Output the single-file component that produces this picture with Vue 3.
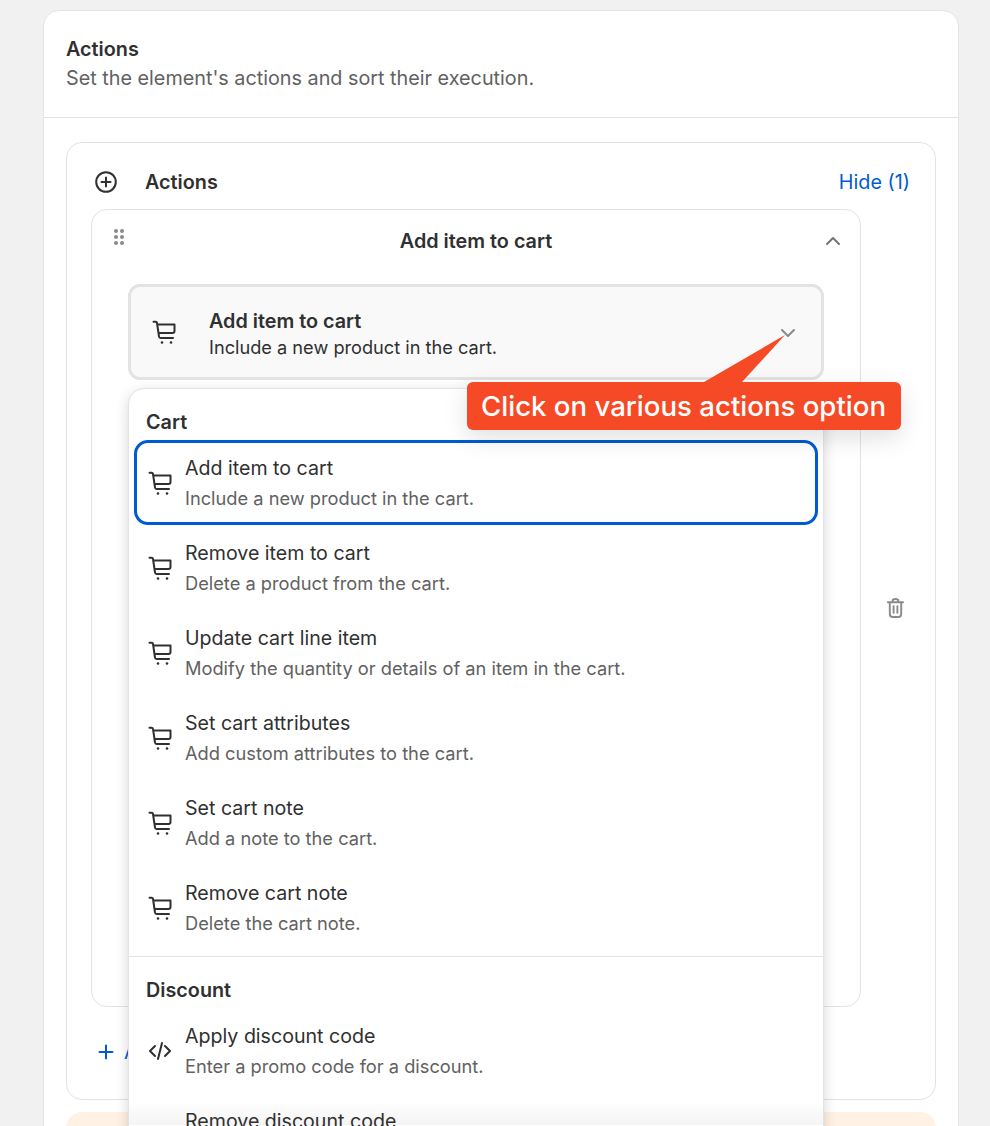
<script setup>
const cart = [
  ['Add item to cart', 'Include a new product in the cart.', true],
  ['Remove item to cart', 'Delete a product from the cart.'],
  ['Update cart line item', 'Modify the quantity or details of an item in the cart.'],
  ['Set cart attributes', 'Add custom attributes to the cart.'],
  ['Set cart note', 'Add a note to the cart.'],
  ['Remove cart note', 'Delete the cart note.'],
]
const cartPath = 'M1.5 1.800H3.600C4.400 1.800 4.900 2.300 5 3L7 16.500C7.100 17.500 7.700 18 8.600 18H21M5.300 4.500H22.500V11C22.500 12.400 21.600 13 20.500 13H6.500'
</script>

<template>
  <div class="page">
    <section class="panel">
      <header class="panel-head">
        <h2>Actions</h2>
        <p>Set the element's actions and sort their execution.</p>
      </header>
      <div class="panel-body">
        <div class="inner">
          <div class="inner-head">
            <svg class="plus" viewBox="0 0 24 24" fill="none" stroke="#303030" stroke-width="2" stroke-linecap="round">
              <circle cx="12" cy="12" r="9.800" />
              <path d="M12 7.500v9M7.500 12h9" />
            </svg>
            <strong>Actions</strong>
            <a class="hide">Hide (1)</a>
          </div>

          <div class="item-row">
            <div class="item">
              <div class="item-head">
                <svg class="drag" viewBox="0 0 12 18" fill="#8a8a8a">
                  <circle cx="3" cy="3" r="2" /><circle cx="9" cy="3" r="2" />
                  <circle cx="3" cy="9" r="2" /><circle cx="9" cy="9" r="2" />
                  <circle cx="3" cy="15" r="2" /><circle cx="9" cy="15" r="2" />
                </svg>
                <strong>Add item to cart</strong>
                <svg class="chev" viewBox="0 0 16 10" fill="none" stroke="#757575" stroke-width="2" stroke-linecap="round" stroke-linejoin="round">
                  <path d="M2 8l6-6 6 6" />
                </svg>
              </div>
              <div class="item-body">
                <div class="select">
                  <svg class="cart" viewBox="0 0 24 24" fill="none" stroke="#303030" stroke-width="2" stroke-linecap="round" stroke-linejoin="round">
                    <path :d="cartPath" />
                    <circle cx="10" cy="22.500" r="1.300" fill="#303030" stroke="none" />
                    <circle cx="19" cy="22.500" r="1.300" fill="#303030" stroke="none" />
                  </svg>
                  <div class="select-text">
                    <strong>Add item to cart</strong>
                    <span>Include a new product in the cart.</span>
                  </div>
                  <svg class="sel-chev" viewBox="0 0 16 10" fill="none" stroke="#8a8a8a" stroke-width="2" stroke-linecap="round" stroke-linejoin="round">
                    <path d="M2 2l6 6 6-6" />
                  </svg>
                </div>

                <div class="menu">
                  <div class="fade"></div>
                  <div class="group">
                    <h3>Cart</h3>
                    <div v-for="row in cart" :key="row[0]" class="opt" :class="{ active: row[2] }">
                      <svg class="cart" viewBox="0 0 24 24" fill="none" stroke="#303030" stroke-width="2" stroke-linecap="round" stroke-linejoin="round">
                        <path :d="cartPath" />
                        <circle cx="10" cy="22.500" r="1.300" fill="#303030" stroke="none" />
                        <circle cx="19" cy="22.500" r="1.300" fill="#303030" stroke="none" />
                      </svg>
                      <div class="opt-text">
                        <span class="t">{{ row[0] }}</span>
                        <span class="d">{{ row[1] }}</span>
                      </div>
                    </div>
                  </div>
                  <div class="group second">
                    <h3>Discount</h3>
                    <div class="opt">
                      <svg class="cart" viewBox="0 0 24 24" fill="none" stroke="#303030" stroke-width="2" stroke-linecap="round" stroke-linejoin="round">
                        <path d="M7 7L2 12 7 17M17 7l5 5-5 5M14 4L10 20" />
                      </svg>
                      <div class="opt-text">
                        <span class="t">Apply discount code</span>
                        <span class="d">Enter a promo code for a discount.</span>
                      </div>
                    </div>
                    <div class="opt top">
                      <span class="cart"></span>
                      <div class="opt-text">
                        <span class="t">Remove discount code</span>
                      </div>
                    </div>
                  </div>
                </div>
              </div>
            </div>
            <svg class="trash" viewBox="0 0 20 22" fill="none" stroke="#8a8a8a" stroke-width="2" stroke-linecap="round" stroke-linejoin="round">
              <path d="M2 5h16M7 5V3.500C7 2.300 8 1.500 10 1.500s3 .8 3 2V5M4 5v12c0 2 1.200 3.500 3 3.500h6c1.800 0 3-1.500 3-3.500V5M8 9v7M12 9v7" />
            </svg>
          </div>

          <div class="add">
            <svg viewBox="0 0 16 16" fill="none" stroke="#005bd3" stroke-width="2" stroke-linecap="round">
              <path d="M8 1.500v13M1.500 8h13" />
            </svg>
            <span>Add</span>
          </div>
        </div>
        <div class="notice"></div>
      </div>
    </section>

    <div class="callout">
      <svg class="tail" viewBox="0 0 90 47">
        <path d="M83 0L2 47H40Z" fill="#f64a26" />
      </svg>
      <span>Click on various actions option</span>
    </div>
  </div>
</template>

<style>
html, body { margin: 0; background: #f1f1f1; overflow: hidden; }
</style>

<style scoped>
.page {
  position: relative;
  height: 1126px;
  overflow: hidden;
  padding: 10px 31px 0 43px;
  box-sizing: border-box;
  background: #f1f1f1;
  font-family: Inter, "Liberation Sans", sans-serif;
  color: #303030;
}
.panel {
  background: #fff;
  border: 1px solid #e3e3e3;
  border-radius: 16px;
  height: 1300px;
}
.panel-head {
  height: 107px;
  padding: 27px 22px 0;
  box-sizing: border-box;
  border-bottom: 1px solid #e3e3e3;
}
.panel-head h2 {
  margin: 0;
  font-size: 19.800px;
  line-height: 22px;
  font-weight: 600;
}
.panel-head p {
  margin: 6px 0 0;
  font-size: 19.800px;
  line-height: 25px;
  color: #616161;
}
.panel-body { padding: 24px 22px 0; }
.inner {
  border: 1px solid #e3e3e3;
  border-radius: 16px;
  height: 956px;
  padding: 0 25px 0 24px;
}
.inner-head {
  display: flex;
  align-items: center;
  height: 66px;
  padding-top: 11px;
  box-sizing: border-box;
}
.plus { width: 24px; height: 24px; margin: 0 0 0 3px; }
.inner-head strong { margin-left: 27px; font-size: 19.800px; font-weight: 600; }
.hide { margin-left: auto; font-size: 19.800px; color: #005bd3; }
.item-row { display: flex; align-items: center; }
.item {
  width: 770px;
  height: 798px;
  box-sizing: border-box;
  border: 1px solid #e3e3e3;
  border-radius: 16px;
  flex: none;
}
.trash { width: 19px; height: 22px; margin-left: 25px; }
.item-head {
  position: relative;
  height: 74px;
  display: flex;
  justify-content: center;
  padding-top: 20px;
  box-sizing: border-box;
}
.item-head strong { font-size: 19.800px; line-height: 22px; font-weight: 600; }
.drag { position: absolute; left: 21px; top: 18px; width: 12px; height: 18px; }
.chev { position: absolute; right: 19px; top: 26px; width: 16px; height: 10px; }
.item-body { position: relative; padding: 0 36px; }
.select {
  position: relative;
  height: 96px;
  box-sizing: border-box;
  border: 3px solid #e3e3e3;
  border-radius: 12px;
  background: #f9f9f9;
  display: flex;
  align-items: center;
  padding: 0 21px;
}
.cart { width: 24px; height: 24px; flex: none; display: block; }
.select-text { margin-left: 33px; padding-top: 3px; display: flex; flex-direction: column; }
.select-text strong { font-size: 19.800px; line-height: 26px; font-weight: 600; }
.select-text span { font-size: 18.200px; line-height: 26px; color: #303030; }
.sel-chev { position: absolute; right: 25px; top: 41px; width: 16px; height: 10px; }
.menu {
  position: absolute;
  left: 36px;
  right: 36px;
  top: 104px;
  height: 760px;
  box-sizing: border-box;
  background: #fff;
  border: 1px solid #e3e3e3;
  border-radius: 16px;
  box-shadow: 0 4px 14px rgba(0, 0, 0, .16);
}
.group { position: relative; padding: 20px 5px 0; }
.group h3 {
  margin: 0 0 4px 12px;
  font-size: 19.800px;
  line-height: 27px;
  font-weight: 600;
}
.group.second { border-top: 1px solid #e3e3e3; margin-top: 6px; }
.opt {
  height: 85px;
  box-sizing: border-box;
  border: 3px solid transparent;
  border-radius: 14px;
  display: flex;
  align-items: center;
  padding-left: 11px;
}
.opt.top { align-items: flex-start; padding-top: 10px; }
.opt.active { border-color: #005bd3; }
.opt-text { margin-left: 13px; display: flex; flex-direction: column; }
.opt-text .t { font-size: 19.600px; line-height: 30px; color: #303030; }
.opt-text .d { font-size: 18.250px; line-height: 30px; color: #616161; }
.fade {
  position: absolute;
  left: 0;
  right: 0;
  bottom: 22px;
  height: 24px;
  background: linear-gradient(to bottom, rgba(243, 243, 243, 0), rgba(243, 243, 243, .9));
}
.add {
  display: flex;
  align-items: center;
  height: 20px;
  margin: 35px 0 0 7px;
  font-size: 19.800px;
  color: #005bd3;
}
.add svg { width: 16px; height: 16px; }
.add span { margin-left: 10px; white-space: nowrap; }
.notice {
  margin-top: 12px;
  height: 60px;
  background: #fff1e3;
  border-radius: 16px;
}
.callout {
  position: absolute;
  left: 467px;
  top: 382px;
  width: 434px;
  height: 48px;
  box-sizing: border-box;
  background: #f64a26;
  border-radius: 6px;
  color: #fff;
  font-size: 27.600px;
  font-weight: 500;
  line-height: 48px;
  padding-left: 14px;
  white-space: nowrap;
  box-shadow: 0 8px 24px rgba(0, 0, 0, .12);
}
.tail { position: absolute; left: 235px; top: -47px; width: 90px; height: 47px; }
.callout span { position: relative; }
</style>
